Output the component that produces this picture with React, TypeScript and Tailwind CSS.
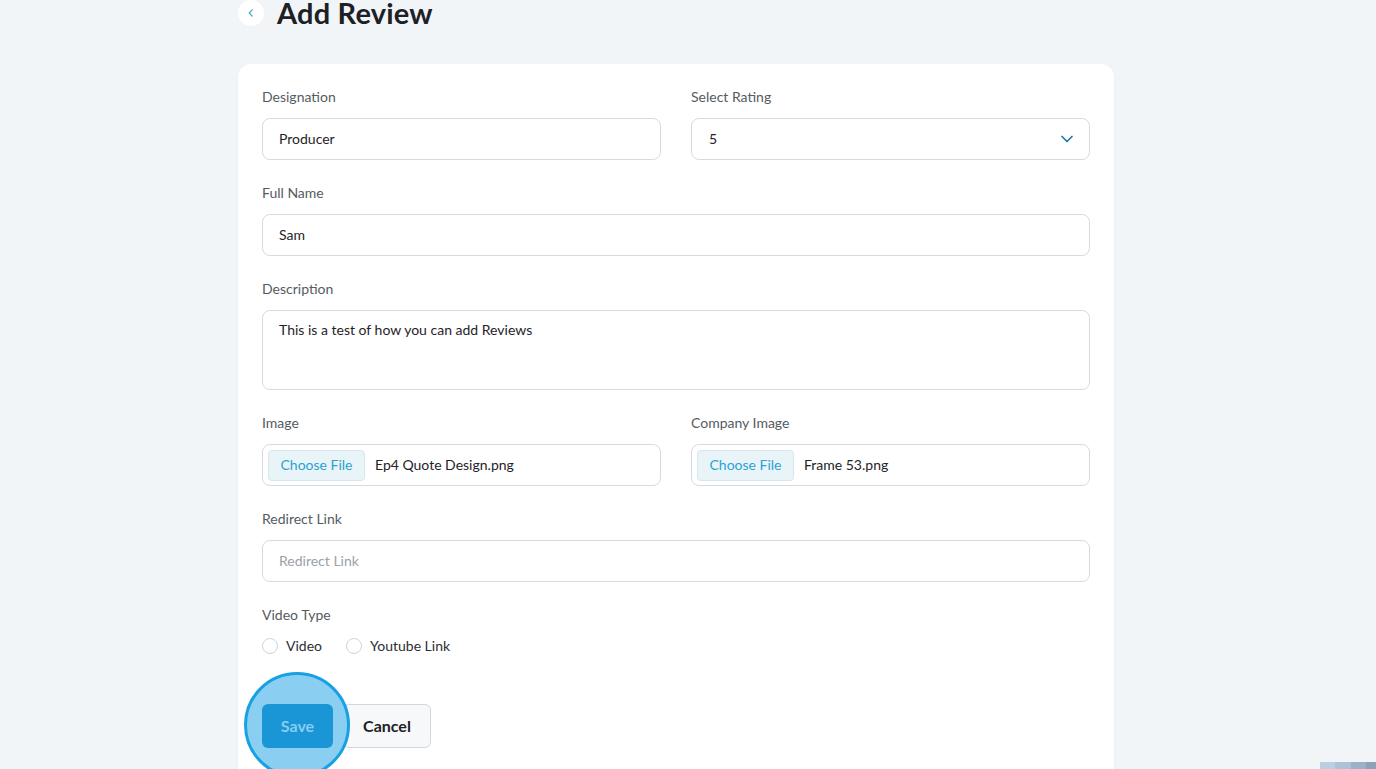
import React from "react";

const font = { fontFamily: "Lato, 'Noto Sans', sans-serif" };

function Label({ children }: { children: React.ReactNode }) {
  return <div className="h-5 text-[14px] leading-[18px] text-[#555b61] mb-[10px]">{children}</div>;
}

function TextInput({ value, placeholder }: { value?: string; placeholder?: string }) {
  return (
    <div className="h-[42px] rounded-lg border border-[#d7dbe0] bg-white flex items-center px-4 pb-[1px] text-[14px]">
      {value ? <span className="text-[#1f2328]">{value}</span> : <span className="text-[#9aa1a9]">{placeholder}</span>}
    </div>
  );
}

function FileInput({ name }: { name: string }) {
  return (
    <div className="h-[42px] rounded-lg border border-[#d7dbe0] bg-white flex items-center pl-[5px] text-[14px]">
      <div className="h-[31px] w-[97px] rounded-[4px] border border-[#d9e6ee] bg-[#e9f4f9] flex items-center justify-center pb-[1px] text-[#2aa3cf]">
        Choose File
      </div>
      <span className="ml-[10px] pb-[1px] text-[#1f2328]">{name}</span>
    </div>
  );
}

function Radio({ label }: { label: string }) {
  return (
    <div className="flex items-center gap-2">
      <div className="w-4 h-4 rounded-full border border-[#cfd4da] bg-white" />
      <span className="text-[14px] text-[#2a2e33] pb-[1px]">{label}</span>
    </div>
  );
}

export default function App() {
  return (
    <div className="min-h-[769px] bg-[#f1f5f8] overflow-hidden relative" style={font}>
      <div className="ml-[238px] w-[876px]">
        <div className="flex items-center h-[28px] -mt-[1px] gap-[13px]">
          <div className="w-[26px] h-[26px] rounded-full bg-white flex items-center justify-center">
            <svg width="12" height="12" viewBox="0 0 12 12" fill="none">
              <path d="M7.2 2.8 L4.2 6 L7.2 9.2" stroke="#4aa6c4" strokeWidth="1.2" strokeLinecap="round" strokeLinejoin="round" />
            </svg>
          </div>
          <h1 className="text-[29px] leading-[34px] font-bold text-[#1d2125] tracking-[0.2px]">Add Review</h1>
        </div>

        <div className="mt-[37px] bg-white rounded-[13px] shadow-[0_1px_3px_rgba(0,0,0,0.04)] px-6 pt-6 pb-10">
          <div className="grid grid-cols-2 gap-x-[30px]">
            <div>
              <Label>Designation</Label>
              <TextInput value="Producer" />
            </div>
            <div>
              <Label>Select Rating</Label>
              <div className="h-[42px] rounded-lg border border-[#d7dbe0] bg-white flex items-center justify-between px-4 pr-[14px] text-[14px]">
                <span className="text-[#1f2328] pl-[1px] pb-[1px]">5</span>
                <svg width="16" height="16" viewBox="0 0 16 16" fill="none">
                  <path d="M3 5.5 L8 10.5 L13 5.5" stroke="#23799f" strokeWidth="1.7" strokeLinecap="round" strokeLinejoin="round" />
                </svg>
              </div>
            </div>
          </div>

          <div className="mt-6">
            <Label>Full Name</Label>
            <TextInput value="Sam" />
          </div>

          <div className="mt-6">
            <Label>Description</Label>
            <div className="h-[80px] rounded-lg border border-[#d7dbe0] bg-white px-4 pt-[8px] text-[14px] text-[#1f2328]">
              This is a test of how you can add Reviews
            </div>
          </div>

          <div className="mt-6 grid grid-cols-2 gap-x-[30px]">
            <div>
              <Label>Image</Label>
              <FileInput name="Ep4 Quote Design.png" />
            </div>
            <div>
              <Label>Company Image</Label>
              <FileInput name="Frame 53.png" />
            </div>
          </div>

          <div className="mt-6">
            <Label>Redirect Link</Label>
            <TextInput placeholder="Redirect Link" />
          </div>

          <div className="mt-6">
            <Label>Video Type</Label>
            <div className="flex items-center gap-[24px] h-5">
              <Radio label="Video" />
              <Radio label="Youtube Link" />
            </div>
          </div>

          <div className="mt-[48px] flex items-center gap-[10px] relative">
            <div className="absolute left-[-18px] top-[-32px] w-[106px] h-[106px] rounded-full bg-[#8acff2] border-[3px] border-[#17a0e2] z-10" />
            <button className="relative z-20 h-[44px] w-[71px] rounded-[6px] bg-[#1a96d7] text-[#86cdf1] text-[16px] font-bold">
              Save
            </button>
            <button className="h-[44px] w-[88px] rounded-[6px] border border-[#d3d7dc] bg-[#f7f8f9] text-[#1d2125] text-[16px] font-bold">
              Cancel
            </button>
          </div>
        </div>
      </div>

      <div className="fixed right-0 bottom-0 flex h-[7px]">
        <div className="w-[15px] bg-[#bccfe1]" />
        <div className="w-[16px] bg-[#adc2d8]" />
        <div className="w-[15px] bg-[#9bb1c7]" />
        <div className="w-[10px] bg-[#8ca2b9]" />
      </div>
    </div>
  );
}
